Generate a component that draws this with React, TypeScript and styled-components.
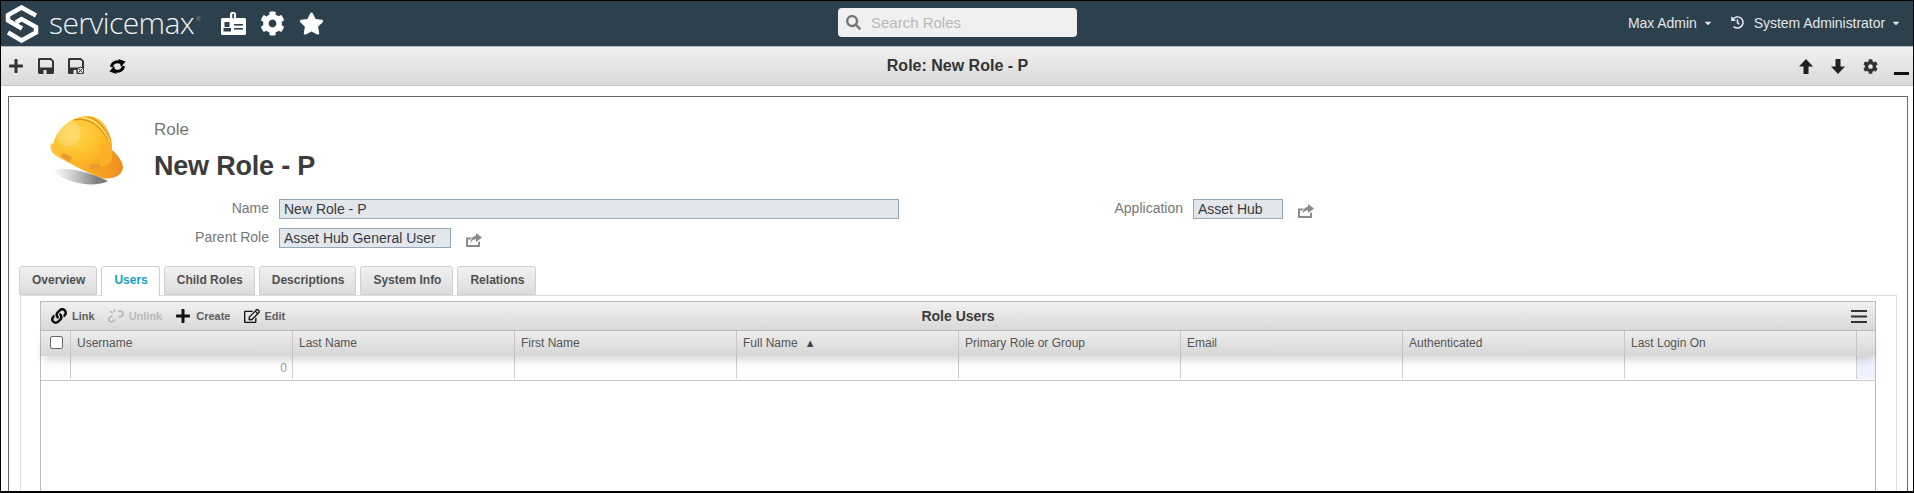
import React from "react";
import styled, { createGlobalStyle } from "styled-components";
import {
  FaCaretDown,
  FaCog,
  FaHistory,
  FaLink,
  FaPlus,
  FaRegEdit,
  FaSearch,
  FaStar,
} from "react-icons/fa";

const GlobalStyle = createGlobalStyle`
  html, body {
    margin: 0;
    padding: 0;
    background: #fff;
  }
  body {
    font-family: "Liberation Sans", Arial, sans-serif;
  }
`;

const Page = styled.div`
  box-sizing: border-box;
  width: 1914px;
  height: 493px;
  border: solid 1px #000;
  border-bottom-width: 2px;
  overflow: hidden;
  background: #fff;
`;

const TopBar = styled.header`
  display: grid;
  grid-template-columns: 1fr 240px 1fr;
  align-items: center;
  height: 45px;
  background: #2d404e;
  color: #e2e6e8;
`;

const Brand = styled.div`
  display: flex;
  align-items: center;
  padding-left: 4px;
`;

const BrandName = styled.span`
  font-family: "Open Sans", sans-serif;
  font-weight: 300;
  font-size: 30px;
  letter-spacing: -0.55px;
  color: #f0f3f4;
  margin-left: 10px;
  margin-top: -2px;
`;

const BrandMark = styled.sup`
  font-size: 6px;
  color: #8d9aa3;
  margin: 0 0 10px 2px;
`;

const BrandIcons = styled.div`
  display: flex;
  align-items: center;
  gap: 14px;
  margin-left: 20px;
  color: #fff;
  font-size: 25px;
`;

const Search = styled.div`
  display: flex;
  align-items: center;
  gap: 10px;
  height: 29px;
  margin: -3px 0 0 1px;
  padding-left: 8px;
  background: #f0f0f0;
  border-radius: 4px;
  color: #777;
  font-size: 15px;
`;

const Placeholder = styled.span`
  color: #b9b9b9;
`;

const UserMenu = styled.div`
  display: flex;
  justify-content: flex-end;
  align-items: center;
  margin-top: -2px;
  font-size: 14px;
  letter-spacing: -0.05px;
  padding-right: 12px;
`;

const MenuItem = styled.span`
  display: flex;
  align-items: center;
  margin-left: 18px;
`;

const Caret = styled(FaCaretDown)`
  font-size: 10px;
  margin-left: 6px;
`;

const HistoryIcon = styled(FaHistory)`
  font-size: 13px;
  margin-right: 10px;
`;

const ActionBar = styled.div`
  display: grid;
  grid-template-columns: 1fr auto 1fr;
  align-items: center;
  height: 38px;
  border-top: solid 1px #b9bcbe;
  border-bottom: solid 1px #c8c8c8;
  background: linear-gradient(#f1f1f1, #d9d9d9);
  color: #333;
`;

const ActionGroup = styled.div<{ $right?: boolean }>`
  display: flex;
  align-items: center;
  justify-content: ${({ $right }) => ($right ? "flex-end" : "flex-start")};
  padding: ${({ $right }) => ($right ? "0 4px 0 0" : "0 0 0 7px")};
`;

const ActionTitle = styled.div`
  font-size: 16px;
  font-weight: bold;
  margin-left: 1px;
  color: #333;
`;

const ActionIcon = styled.span<{ $gap: number; $size?: number }>`
  display: flex;
  margin-right: ${({ $gap }) => $gap}px;
  font-size: ${({ $size }) => $size ?? 16}px;
`;

const Minimize = styled.span`
  display: block;
  width: 15px;
  height: 3px;
  margin-top: 14px;
  background: #111;
`;

const Panel = styled.main`
  height: 500px;
  margin: 10px 5px 0 7px;
  border: solid 1px #666;
`;

const RoleHead = styled.section`
  display: flex;
  padding: 11px 0 0 31px;
  height: 84px;
`;

const RoleTitles = styled.div`
  margin-left: 18px;
`;

const RoleKind = styled.div`
  font-size: 17px;
  line-height: 20px;
  color: #777;
  margin-top: 12px;
`;

const RoleName = styled.h1`
  font-size: 27px;
  line-height: 32px;
  font-weight: bold;
  letter-spacing: -0.2px;
  color: #3c3c3c;
  margin: 10px 0 0;
`;

const Form = styled.section`
  display: grid;
  grid-template-columns: 260px 620px 274px 1fr;
  column-gap: 10px;
  row-gap: 9px;
  margin-top: 7px;
`;

const Label = styled.label`
  font-size: 14px;
  line-height: 18px;
  color: #777;
  text-align: right;
`;

const FieldCell = styled.div`
  display: flex;
  align-items: center;
`;

const Value = styled.div<{ $width: number }>`
  box-sizing: border-box;
  width: ${({ $width }) => $width}px;
  height: 20px;
  padding-left: 4px;
  border: solid 1px #93a8b4;
  background: #e2e7ee;
  font-size: 14px;
  line-height: 19px;
  color: #3a3a3a;
`;

const ShareLink = styled.span`
  display: flex;
  margin: 3px 0 0 15px;
`;

const Tabs = styled.nav`
  display: flex;
  margin: 18px 0 0 10px;
  height: 29px;
  position: relative;
  z-index: 1;
`;

const Tab = styled.div<{ $active?: boolean }>`
  box-sizing: border-box;
  height: ${({ $active }) => ($active ? 30 : 29)}px;
  padding: 0 11px 0 12px;
  margin-right: 4px;
  border: solid 1px #cfcfcf;
  border-bottom: ${({ $active }) => ($active ? "none" : "solid 1px #cfcfcf")};
  border-radius: 3px 3px 0 0;
  background: ${({ $active }) => ($active ? "#fff" : "linear-gradient(#f1f1f1, #dcdcdc)")};
  font-size: 12px;
  font-weight: bold;
  line-height: 26px;
  color: ${({ $active }) => ($active ? "#1b9cc1" : "#505050")};
`;

const TabPane = styled.section`
  margin: 0 10px 0 11px;
  height: 300px;
  padding: 5px 20px 0 19px;
  border: solid 1px #dedede;
`;

const Table = styled.div`
  height: 300px;
  border: solid 1px #bcbcbc;
`;

const TableBar = styled.div`
  display: grid;
  grid-template-columns: 1fr auto 1fr;
  align-items: center;
  height: 28px;
  border-bottom: solid 1px #bcbcbc;
  background: linear-gradient(#f1f1f1, #d8d8d8);
`;

const TableTools = styled.div`
  display: flex;
  align-items: center;
  padding-left: 10px;
`;

const Tool = styled.span<{ $disabled?: boolean }>`
  display: flex;
  align-items: center;
  gap: 5px;
  margin-right: 13px;
  font-size: 11px;
  font-weight: bold;
  color: ${({ $disabled }) => ($disabled ? "#bbb" : "#5e5e5e")};

  svg {
    font-size: 16px;
    color: ${({ $disabled }) => ($disabled ? "#b5b5b5" : "#111")};
  }
`;

const TableTitle = styled.div`
  font-size: 14px;
  font-weight: bold;
  color: #3c3c3c;
`;

const TableMenu = styled.div`
  display: flex;
  justify-content: flex-end;
  padding-right: 8px;
`;

const Columns = styled.div<{ $head?: boolean }>`
  display: grid;
  grid-template-columns: 30px repeat(7, 222px) 232px 1fr;
  height: 25px;
  box-sizing: border-box;
  background: ${({ $head }) => ($head ? "linear-gradient(#ededed, #d6d6d6)" : "#fff")};
  border-bottom: ${({ $head }) => ($head ? "none" : "solid 1px #c9c9c9")};
  box-shadow: ${({ $head }) => ($head ? "0 6px 10px -2px rgba(0, 0, 0, 0.16)" : "none")};
  position: relative;
  z-index: ${({ $head }) => ($head ? 1 : 0)};
`;

const HeadCell = styled.div`
  box-sizing: border-box;
  display: flex;
  align-items: center;
  gap: 7px;
  padding: 0 0 2px 6px;
  border-right: solid 1px #c6c6c6;
  font-size: 12px;
  color: #555;

  &:last-child {
    border-right: none;
  }
`;

const CheckCell = styled(HeadCell)`
  justify-content: center;
  padding: 0 0 2px 2px;
`;

const Check = styled.span`
  box-sizing: border-box;
  display: block;
  width: 13px;
  height: 13px;
  border: solid 1px #666;
  border-radius: 2px;
  background: #fff;
`;

const SortMark = styled.span`
  font-size: 11px;
  color: #444;
`;

const BodyCell = styled.div<{ $filler?: boolean }>`
  box-sizing: border-box;
  height: 23px;
  padding-right: 5px;
  border-right: solid 1px #d0d0d0;
  background: ${({ $filler }) => ($filler ? "#eff1fd" : "transparent")};
  font-size: 12px;
  line-height: 24px;
  color: #999;
  text-align: right;

  &:last-child {
    border-right: none;
  }
`;

const columns = [
  "Username",
  "Last Name",
  "First Name",
  "Full Name",
  "Primary Role or Group",
  "Email",
  "Authenticated",
  "Last Login On",
];

function ServiceMaxLogo() {
  return (
    <svg width="34" height="38" viewBox="0 0 34 38" fill="none" stroke="#fff" strokeWidth="4.5">
      <path d="M31 10.500 L16.500 2.500 L3 10 L3 15.500 L17 23.500" />
      <path d="M11 17.500 L16.500 14 L31 22 L31 27.500 L16.500 35.500 L3 27.500" />
    </svg>
  );
}

function BadgeIcon() {
  return (
    <svg width="25" height="23" viewBox="0 0 25 23">
      <path
        fill="#fff"
        d="M1.500 6H9V2.500C9 1 10 0 11 0h2c1 0 2 1 2 2.500V6h8.500C24.400 6 25 6.600 25 7.500v14c0 .900-.600 1.500-1.500 1.500h-22C.600 23 0 22.400 0 21.500v-14C0 6.600.600 6 1.500 6z"
      />
      <rect x="11.300" y="1.800" width="1.800" height="4.500" fill="#2d404e" />
      <rect x="3.500" y="10" width="5" height="5" fill="#2d404e" />
      <rect x="2.500" y="16" width="7.500" height="3.500" fill="#2d404e" />
      <rect x="13" y="12" width="9" height="1.600" fill="#2d404e" />
      <rect x="13" y="16" width="9" height="1.600" fill="#2d404e" />
    </svg>
  );
}

function SaveIcon({ cancel }: { cancel?: boolean }) {
  return (
    <svg width="16" height="16" viewBox="0 0 16 16">
      <path
        fill="#333"
        fillRule="evenodd"
        d="M1.500 0H13l3 3v11.500c0 .800-.700 1.500-1.500 1.500h-13C.700 16 0 15.300 0 14.500v-13C0 .700.700 0 1.500 0zM2 2v7.500h12V3.500L12.500 2zM5.500 12v4h3v-4z"
      />
      {cancel && (
        <g>
          <circle cx="12.500" cy="12.500" r="3.300" fill="#e6e6e6" stroke="#333" strokeWidth="1" />
          <path d="M11 11l3 3M14 11l-3 3" stroke="#333" strokeWidth="1" />
        </g>
      )}
    </svg>
  );
}

function RefreshIcon() {
  return (
    <svg width="17" height="15" viewBox="0 0 17 15">
      <g fill="none" stroke="#000" strokeWidth="3">
        <path d="M2.500 8 C3 4 7 1.500 11.500 3.500" />
        <path d="M14.500 7 C14 11 10 13.500 5.500 11.500" />
      </g>
      <path d="M9.500 0 L16.500 2.500 L12 8Z" fill="#000" />
      <path d="M7.500 15 L0.500 12.500 L5 7Z" fill="#000" />
    </svg>
  );
}

function ArrowIcon({ down }: { down?: boolean }) {
  return (
    <svg width="14" height="15" viewBox="0 0 14 15">
      <path
        fill="#222"
        d="M7 0 L14 7.500 H9.500 V15 H4.500 V7.500 H0Z"
        transform={down ? "rotate(180 7 7.500)" : undefined}
      />
    </svg>
  );
}

function ShareIcon() {
  return (
    <svg width="16" height="14" viewBox="0 0 16 14" fill="#8a8a8a">
      <path d="M0 4.500 H6 L4.500 6.500 H2 V12 H12 V9.500 L14 8 V14 H0Z" />
      <path d="M10 0 L16 4.500 L10 9 V6.300 C7.500 6.300 6 7.200 4.500 10 C4.800 6 6.800 3 10 2.800Z" />
    </svg>
  );
}

function UnlinkIcon() {
  return (
    <svg width="16" height="14" viewBox="0 0 16 14" fill="none" stroke="#b8b8b8" strokeWidth="1.700">
      <path d="M4.500 6.500 C1 8 0 10.500 1.500 12 C3 13.500 5.500 13 7 10.500" />
      <path d="M10 2.500 C13 1.500 15.500 3 15 5.500 C14.700 7.500 12.500 8 10.500 7.500" />
      <path d="M6.500 0.500 V3 M2.500 2 L4.500 4" />
    </svg>
  );
}

function MenuIcon() {
  return (
    <svg width="16" height="13" viewBox="0 0 16 13" fill="#333">
      <rect width="16" height="2" />
      <rect y="5.500" width="16" height="2" />
      <rect y="11" width="16" height="2" />
    </svg>
  );
}

function HardHat() {
  return (
    <svg width="96" height="84" viewBox="0 0 96 84">
      <defs>
        <linearGradient id="hatShadow" x1="0" x2="1" y1="0" y2="0">
          <stop offset="0" stopColor="#999" stopOpacity="0" />
          <stop offset="0.8" stopColor="#666" stopOpacity="0.85" />
        </linearGradient>
        <radialGradient id="hatDome" cx="0.35" cy="0.35" r="0.8">
          <stop offset="0" stopColor="#ffd84e" />
          <stop offset="0.6" stopColor="#fdbd2a" />
          <stop offset="1" stopColor="#f8a61a" />
        </radialGradient>
        <linearGradient id="hatBrim" x1="0" x2="1" y1="0" y2="0">
          <stop offset="0" stopColor="#ffc53c" />
          <stop offset="0.6" stopColor="#f8a820" />
          <stop offset="1" stopColor="#ee8c1e" />
        </linearGradient>
      </defs>
      <path d="M12 62 C26 58 50 64 68 73 C58 79 28 78 12 62Z" fill="url(#hatShadow)" />
      <path
        d="M11 35 C9 42 13 47 22 51 C34 58 50 66 62 70 C72 72 82 68 83 60 C83 54 78 47 72 42 L60 52 L30 44Z"
        fill="url(#hatBrim)"
      />
      <path
        d="M13 38 C15 22 30 9 46 8 C59 7 69 18 72 36 L72 50 C72 56 66 60 56 58 C40 56 22 49 13 38Z"
        fill="url(#hatDome)"
      />
      <path d="M60 36 L72 35 L72 50 C71 55 66 59 60 58Z" fill="#fbb027" />
      <path d="M34 12 C48 9 60 17 68 32" fill="none" stroke="#df8f16" strokeWidth="1.200" />
      <path d="M42 10 C54 10 63 19 70 33" fill="none" stroke="#ffe273" strokeWidth="1.600" />
      <path d="M48 9 C58 11 65 20 71 33" fill="none" stroke="#df8f16" strokeWidth="1.200" />
      <path d="M23 45 L32 49 L30 54 L21 49Z" fill="#ea9a32" />
      <path d="M50 56 L60 56 L60 62 L50 61Z" fill="#ea9a32" />
      <ellipse cx="29" cy="26" rx="11" ry="13" fill="#fff" opacity="0.18" transform="rotate(30 29 26)" />
    </svg>
  );
}

export default function App() {
  return (
    <Page>
      <GlobalStyle />
      <TopBar>
        <Brand>
          <ServiceMaxLogo />
          <BrandName>servicemax</BrandName>
          <BrandMark>®</BrandMark>
          <BrandIcons>
            <BadgeIcon />
            <FaCog />
            <FaStar />
          </BrandIcons>
        </Brand>
        <Search>
          <FaSearch />
          <Placeholder>Search Roles</Placeholder>
        </Search>
        <UserMenu>
          <MenuItem>
            Max Admin
            <Caret />
          </MenuItem>
          <MenuItem>
            <HistoryIcon />
            System Administrator
            <Caret />
          </MenuItem>
        </UserMenu>
      </TopBar>

      <ActionBar>
        <ActionGroup>
          <ActionIcon $gap={14}>
            <FaPlus />
          </ActionIcon>
          <ActionIcon $gap={14}>
            <SaveIcon />
          </ActionIcon>
          <ActionIcon $gap={25}>
            <SaveIcon cancel />
          </ActionIcon>
          <ActionIcon $gap={0}>
            <RefreshIcon />
          </ActionIcon>
        </ActionGroup>
        <ActionTitle>Role: New Role - P</ActionTitle>
        <ActionGroup $right>
          <ActionIcon $gap={18}>
            <ArrowIcon />
          </ActionIcon>
          <ActionIcon $gap={18}>
            <ArrowIcon down />
          </ActionIcon>
          <ActionIcon $gap={16} $size={15}>
            <FaCog />
          </ActionIcon>
          <Minimize />
        </ActionGroup>
      </ActionBar>

      <Panel>
        <RoleHead>
          <HardHat />
          <RoleTitles>
            <RoleKind>Role</RoleKind>
            <RoleName>New Role - P</RoleName>
          </RoleTitles>
        </RoleHead>

        <Form>
          <Label>Name</Label>
          <Value $width={620}>New Role - P</Value>
          <Label>Application</Label>
          <FieldCell>
            <Value $width={90}>Asset Hub</Value>
            <ShareLink>
              <ShareIcon />
            </ShareLink>
          </FieldCell>
          <Label>Parent Role</Label>
          <FieldCell>
            <Value $width={172}>Asset Hub General User</Value>
            <ShareLink>
              <ShareIcon />
            </ShareLink>
          </FieldCell>
        </Form>

        <Tabs>
          <Tab>Overview</Tab>
          <Tab $active>Users</Tab>
          <Tab>Child Roles</Tab>
          <Tab>Descriptions</Tab>
          <Tab>System Info</Tab>
          <Tab>Relations</Tab>
        </Tabs>
        <TabPane>
          <Table>
            <TableBar>
              <TableTools>
                <Tool>
                  <FaLink />
                  Link
                </Tool>
                <Tool $disabled>
                  <UnlinkIcon />
                  Unlink
                </Tool>
                <Tool>
                  <FaPlus />
                  Create
                </Tool>
                <Tool>
                  <FaRegEdit />
                  Edit
                </Tool>
              </TableTools>
              <TableTitle>Role Users</TableTitle>
              <TableMenu>
                <MenuIcon />
              </TableMenu>
            </TableBar>
            <Columns $head>
              <CheckCell>
                <Check />
              </CheckCell>
              {columns.map((name) => (
                <HeadCell key={name}>
                  {name}
                  {name === "Full Name" && <SortMark>▲</SortMark>}
                </HeadCell>
              ))}
              <HeadCell />
            </Columns>
            <Columns>
              <BodyCell />
              <BodyCell>0</BodyCell>
              {columns.slice(1).map((name) => (
                <BodyCell key={name} />
              ))}
              <BodyCell $filler />
            </Columns>
          </Table>
        </TabPane>
      </Panel>
    </Page>
  );
}
